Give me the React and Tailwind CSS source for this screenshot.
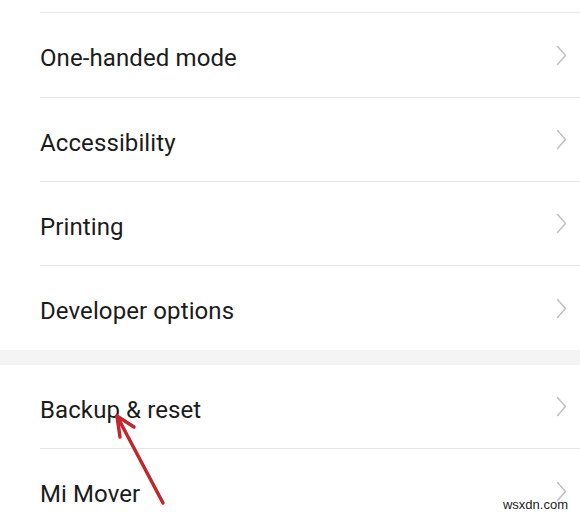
const Chevron = () => (
  <svg width="11" height="21" viewBox="0 0 11 21" fill="none">
    <polyline points="1.5,1.5 9.5,10.5 1.5,19.5" stroke="#c2c2c2" strokeWidth="1.6" strokeLinecap="round" strokeLinejoin="round" />
  </svg>
);

const Row = ({ label, last, tall }) => (
  <div className="pl-10">
    <div
      className={`flex items-center justify-between pr-[13px] ${tall ? "h-[85px]" : "h-[84px]"} ${
        last ? "" : "border-b border-[#e6e6e6]"
      }`}
    >
      <span className="pt-[6px] text-[24px] text-[#1b1b1b] tracking-[0.1px]">{label}</span>
      <Chevron />
    </div>
  </div>
);

export default function App() {
  return (
    <div className="relative h-[517px] w-[580px] overflow-hidden bg-white font-['Roboto',sans-serif]">
      <div className="pl-10">
        <div className="h-[13px] border-b border-[#e6e6e6]"></div>
      </div>
      <Row label="One-handed mode" tall />
      <Row label="Accessibility" />
      <Row label="Printing" />
      <Row label="Developer options" last />
      <div className="h-[15px] bg-[#f4f4f4]"></div>
      <Row label="Backup & reset" />
      <Row label="Mi Mover" last />

      {/* red annotation arrow */}
      <svg className="absolute left-0 top-0" width="580" height="517" viewBox="0 0 580 517" fill="none">
        <path d="M163 503 L117 416" stroke="#c1272d" strokeWidth="3.5" strokeLinecap="round" />
        <path d="M120 437 L117 416 L134 427" stroke="#c1272d" strokeWidth="3.5" strokeLinecap="round" strokeLinejoin="round" />
      </svg>

      <span className="absolute right-[12px] bottom-[3px] font-['Liberation_Sans',sans-serif] text-[13px] text-[#222]">
        wsxdn.com
      </span>
    </div>
  );
}
